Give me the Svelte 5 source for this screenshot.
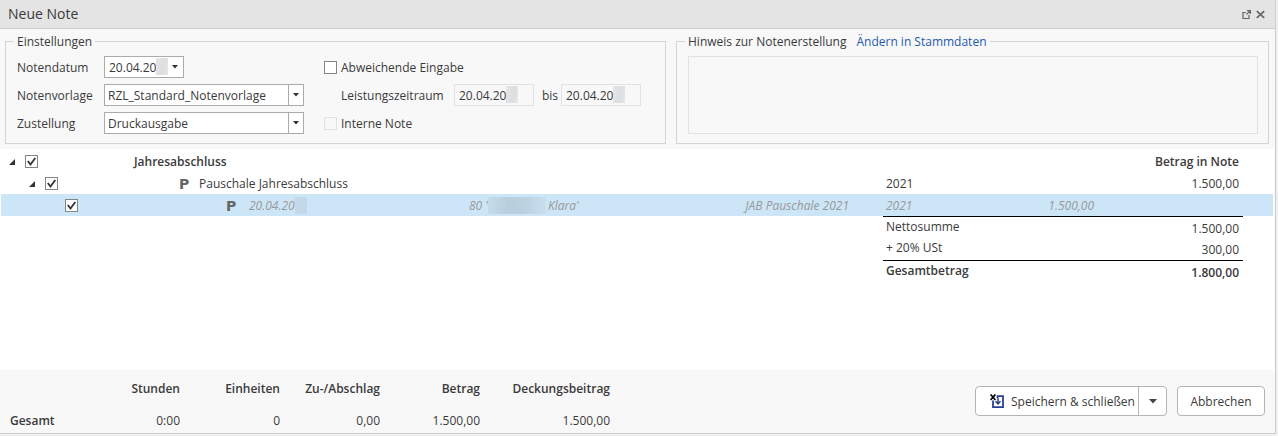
<script>
  let deviating = $state(false);
  let internal = $state(false);
  let template = $state('RZL_Standard_Notenvorlage');
  let delivery = $state('Druckausgabe');
  let checks = $state([true, true, true]);

  const totals = [
    { head: 'Stunden', value: '0:00' },
    { head: 'Einheiten', value: '0' },
    { head: 'Zu-/Abschlag', value: '0,00' },
    { head: 'Betrag', value: '1.500,00' },
    { head: 'Deckungsbeitrag', value: '1.500,00', wide: true }
  ];
</script>

{#snippet arrow()}
  <svg class="arrow" width="6" height="4" viewBox="0 0 6 4" aria-hidden="true"><path d="M0 0h6L3 3.5z" fill="#333" /></svg>
{/snippet}

{#snippet expander()}
  <button class="expander" aria-label="Jahresabschluss">
    <svg width="6" height="6" viewBox="0 0 6 6" aria-hidden="true"><path d="M6 0v6H0z" fill="#333" /></svg>
  </button>
{/snippet}

<div class="window">
  <header>
    <h1>Neue Note</h1>
    <button class="tool" aria-label="Neue Note">
      <svg width="9" height="9" viewBox="0 0 9 9" fill="none" stroke="#666"><path d="M4 2.500H1v6h6V5" stroke-width="1.200" /><path d="M5 .6h3.400V4M8.400.6L4.500 4.500" stroke-width="1.200" /></svg>
    </button>
    <button class="tool" aria-label="Abbrechen">
      <svg width="9" height="9" viewBox="0 0 9 9" fill="none" stroke="#666" stroke-width="1.700"><path d="M.8 1.200l7.400 6.600M8.200 1.200L.8 7.800" /></svg>
    </button>
  </header>

  <div class="panels">
    <fieldset class="settings">
      <legend>Einstellungen</legend>
      <div class="form">
        <label for="date">Notendatum</label>
        <div class="date">
          <input id="date" type="text" value="20.04.20" />
          <span class="smudge"></span>
          <button class="drop" aria-label="Notendatum">{@render arrow()}</button>
        </div>
        <label class="check"><input type="checkbox" bind:checked={deviating} />Abweichende Eingabe</label>

        <label for="template">Notenvorlage</label>
        <div class="select">
          <select id="template" bind:value={template}><option>RZL_Standard_Notenvorlage</option></select>
          <span class="drop">{@render arrow()}</span>
        </div>
        <div class="period">
          <label for="from">Leistungszeitraum</label>
          <div class="date off"><input id="from" type="text" value="20.04.20" disabled /><span class="smudge"></span></div>
          <label class="to" for="to">bis</label>
          <div class="date off"><input id="to" type="text" value="20.04.20" disabled /><span class="smudge"></span></div>
        </div>

        <label for="delivery">Zustellung</label>
        <div class="select">
          <select id="delivery" bind:value={delivery}><option>Druckausgabe</option></select>
          <span class="drop">{@render arrow()}</span>
        </div>
        <label class="check"><input type="checkbox" bind:checked={internal} disabled />Interne Note</label>
      </div>
    </fieldset>

    <fieldset class="hint">
      <legend><label for="hint">Hinweis zur Notenerstellung</label><a href="#stammdaten">Ändern in Stammdaten</a></legend>
      <textarea id="hint" disabled></textarea>
    </fieldset>
  </div>

  <main>
    <table class="tree">
      <colgroup>
        <col class="c-tree" /><col class="c-name" /><col class="c-client" /><col />
        <col class="c-year" /><col class="c-amount" /><col class="c-note" /><col class="c-end" />
      </colgroup>
      <tbody>
        <tr class="bold">
          <td><div class="node">{@render expander()}<input type="checkbox" bind:checked={checks[0]} aria-label="Jahresabschluss" /></div></td>
          <td>Jahresabschluss</td>
          <td></td><td></td><td></td><td></td>
          <td class="num">Betrag in Note</td><td></td>
        </tr>
        <tr>
          <td><div class="node level2">{@render expander()}<input type="checkbox" bind:checked={checks[1]} aria-label="Pauschale Jahresabschluss" /></div></td>
          <td><div class="name level2"><b class="flat">P</b>Pauschale Jahresabschluss</div></td>
          <td></td><td></td><td>2021</td><td></td>
          <td class="num">1.500,00</td><td></td>
        </tr>
        <tr class="selected">
          <td><div class="node level3"><input type="checkbox" bind:checked={checks[2]} aria-label="JAB Pauschale 2021" /></div></td>
          <td><div class="name level3"><b class="flat">P</b><i>20.04.20</i><span class="smudge blue"></span></div></td>
          <td><div class="client"><i>80 '</i><span class="smudge blue long"></span><i>Klara'</i></div></td>
          <td class="num"><i>JAB Pauschale 2021</i></td>
          <td><i>2021</i></td>
          <td class="num"><i>1.500,00</i></td><td></td><td></td>
        </tr>
        <tr class="sum ruled"><td colspan="4"></td><td class="label" colspan="2">Nettosumme</td><td class="num">1.500,00</td><td></td></tr>
        <tr class="sum"><td colspan="4"></td><td class="label" colspan="2">+ 20% USt</td><td class="num">300,00</td><td></td></tr>
        <tr class="sum ruled bold"><td colspan="4"></td><td class="label" colspan="2">Gesamtbetrag</td><td class="num">1.800,00</td><td></td></tr>
      </tbody>
    </table>
  </main>

  <footer>
    <table class="totals">
      <thead>
        <tr><td class="first"></td>{#each totals as t}<th class:wide={t.wide}>{t.head}</th>{/each}</tr>
      </thead>
      <tbody>
        <tr><th class="first">Gesamt</th>{#each totals as t}<td>{t.value}</td>{/each}</tr>
      </tbody>
    </table>
    <div class="actions">
      <div class="split">
        <button class="save">
          <svg width="14" height="15" viewBox="0 0 14 15" fill="none" aria-hidden="true">
            <path d="M3 6.500V13.200h10V2.200H7.500V4" stroke="#2b3f92" stroke-width="1.800" />
            <path d="M8 4v5M5.500 7.200L8 9.800l2.500-2.600" stroke="#2b3f92" stroke-width="1.500" />
            <path d="M.6.500l4.800 5.500M5.400.500L.6 6" stroke="#000" stroke-width="1.700" />
          </svg>
          Speichern &amp; schließen
        </button>
        <button class="more" aria-label="Speichern &amp; schließen"><svg width="8" height="5" viewBox="0 0 8 5"><path d="M0 0h8L4 4.500z" fill="#444" /></svg></button>
      </div>
      <button class="cancel">Abbrechen</button>
    </div>
  </footer>
</div>

<style>
  :global(body) {
    background: #f0f0f0;
  }
  * {
    box-sizing: border-box;
  }
  .window,
  input,
  select,
  textarea,
  button {
    font-family: 'Open Sans', 'Noto Sans', sans-serif;
    font-size: 12px;
    line-height: 16px;
    color: #3a3a3a;
  }
  button,
  input,
  select {
    margin: 0;
    padding: 0;
    border: 0;
    background: none;
  }
  .window {
    margin-right: 2px;
    border: solid #ccc;
    border-width: 0 1px 1px 0;
    background: #f8f8f8;
    white-space: nowrap;
  }
  header {
    display: flex;
    align-items: center;
    gap: 5px;
    height: 29px;
    padding: 0 10px 0 8px;
    border-bottom: 1px solid #ccc;
    background: #e4e4e4;
  }
  h1 {
    flex: 1;
    margin: 0;
    font-size: 14px;
    font-weight: 400;
    line-height: 20px;
  }
  .tool {
    display: flex;
  }

  .panels {
    display: flex;
    gap: 10px;
    padding: 3px 6px 5px 5px;
  }
  fieldset {
    min-width: 0;
    margin: 0;
    border: 1px solid #d4d4d4;
  }
  legend {
    padding: 2px 3px 0;
  }
  .settings {
    flex: 0 0 661px;
    padding: 6px 11px 9px 8px;
  }
  .hint {
    display: flex;
    flex: 1;
    padding: 6px 10px 8px 8px;
  }
  .hint a {
    margin-left: 10px;
    color: #1f5ab0;
    text-decoration: none;
  }
  .hint textarea {
    display: block;
    width: 100%;
    height: 78px;
    margin-left: 3px;
    border: 1px solid #e2e2e2;
    background: transparent;
    resize: none;
  }
  .form {
    display: grid;
    grid-template-columns: 87px 220px 1fr;
    grid-auto-rows: 22px;
    row-gap: 6px;
    align-items: center;
    padding-left: 3px;
  }
  .form label {
    padding-top: 2px;
  }
  .date,
  .select {
    position: relative;
    display: flex;
    height: 22px;
    border: 1px solid #ababab;
    background: #fff;
  }
  .date {
    width: 80px;
  }
  .select {
    width: 200px;
  }
  .date input {
    width: 100%;
    padding: 2px 0 0 4px;
  }
  .select select {
    width: 100%;
    padding: 2px 0 0 3px;
    appearance: none;
  }
  .drop {
    display: flex;
    flex: 0 0 16px;
    align-items: center;
    justify-content: center;
  }
  .select .drop {
    position: absolute;
    top: 0;
    right: 0;
    width: 15px;
    height: 20px;
    border-left: 1px solid #ababab;
    pointer-events: none;
  }
  .smudge {
    width: 12px;
    height: 17px;
    background: linear-gradient(100deg, #e4e6e8, #dcdee0 60%, #e6e7e8);
  }
  .date .smudge {
    position: absolute;
    top: 1px;
    left: 51px;
  }
  .date.off {
    border-color: #e2e2e2;
    background: transparent;
  }
  .form .check {
    display: flex;
    align-items: center;
    gap: 4px;
    padding-top: 1px;
  }
  input[type='checkbox'] {
    flex: none;
    width: 13px;
    height: 13px;
    border: 1px solid #858585;
    background: #fff;
    appearance: none;
  }
  input[type='checkbox']:checked {
    background: #fff url("data:image/svg+xml,%3Csvg xmlns='http://www.w3.org/2000/svg' viewBox='0 0 11 11'%3E%3Cpath d='M1.800 5l2.700 3.500L9.300 2' fill='none' stroke='%23333' stroke-width='1.800'/%3E%3C/svg%3E");
  }
  input[type='checkbox']:disabled {
    border-color: #e2e2e2;
    background: transparent;
  }
  .period {
    display: flex;
    align-items: center;
    padding-left: 17px;
  }
  .period > label:first-child {
    width: 113px;
  }
  .period .to {
    width: 27px;
    padding-left: 8px;
  }

  main {
    min-height: 221px;
    margin-right: 1px;
    padding: 1px 1px 0 1px;
    background: #fff;
  }
  table {
    border-spacing: 0;
  }
  .tree {
    width: 100%;
    table-layout: fixed;
  }
  .c-tree { width: 133px; }
  .c-name { width: 335px; }
  .c-client { width: 200px; }
  .c-year { width: 100px; }
  .c-amount { width: 115px; }
  .c-note { width: 145px; }
  .c-end { width: 30px; }
  .tree td {
    height: 22px;
    padding: 1px 0 0;
  }
  .tree td:nth-child(5),
  .tree .label {
    padding-left: 3px;
  }
  .tree .num {
    padding-right: 4px;
    text-align: right;
  }
  .tree td:nth-child(4).num {
    padding-right: 34px;
  }
  .bold,
  th {
    font-weight: 600;
  }
  .node,
  .name,
  .client {
    display: flex;
    align-items: center;
  }
  .node {
    gap: 10px;
    padding-left: 8px;
  }
  .node.level2 {
    padding-left: 28px;
  }
  .node.level3 {
    padding-left: 64px;
  }
  .expander {
    display: flex;
  }
  .name.level2 {
    padding-left: 45px;
  }
  .name.level3 {
    padding-left: 92px;
  }
  .flat {
    width: 20px;
    font-family: 'DejaVu Sans', sans-serif;
    font-size: 14px;
    font-weight: 700;
    color: #666;
  }
  .level3 .flat {
    width: 23px;
  }
  .selected {
    background: #cde6f7;
    color: #999;
  }
  .smudge.blue {
    background: #c3d9ea;
  }
  .smudge.long {
    width: 58px;
    margin-right: 2px;
    background: linear-gradient(90deg, #c5dbea, #b9cedd 35%, #bdd2e1 65%, #c9dfef);
  }
  .ruled .label,
  .ruled .num {
    border-top: 1px solid #000;
  }
  .tree .sum td {
    height: 22px;
  }
  .tree .sum .num {
    padding-top: 2px;
  }
  .tree .sum .label {
    padding-bottom: 3px;
  }

  footer {
    display: flex;
    align-items: flex-start;
    justify-content: space-between;
    padding: 8px 10px 1px;
  }
  .totals th,
  .totals td {
    width: 100px;
    height: 22px;
    padding: 0;
    text-align: right;
  }
  .totals thead th {
    height: 32px;
    padding-bottom: 10px;
  }
  .totals .wide {
    width: 130px;
  }
  .totals .first {
    width: 70px;
    text-align: left;
  }
  .actions {
    display: flex;
    gap: 10px;
    padding-top: 8px;
  }
  .split,
  .cancel {
    display: flex;
    height: 30px;
    border: 1px solid #b5b5b5;
    border-radius: 4px;
    background: #fff;
  }
  .save {
    display: flex;
    align-items: center;
    gap: 7px;
    width: 162px;
    padding-left: 14px;
  }
  .save,
  .cancel {
    padding-top: 1px;
  }
  .more {
    display: flex;
    align-items: center;
    justify-content: center;
    width: 28px;
    border-left: 1px solid #b5b5b5;
  }
  .cancel {
    align-items: center;
    justify-content: center;
    width: 88px;
  }
</style>
